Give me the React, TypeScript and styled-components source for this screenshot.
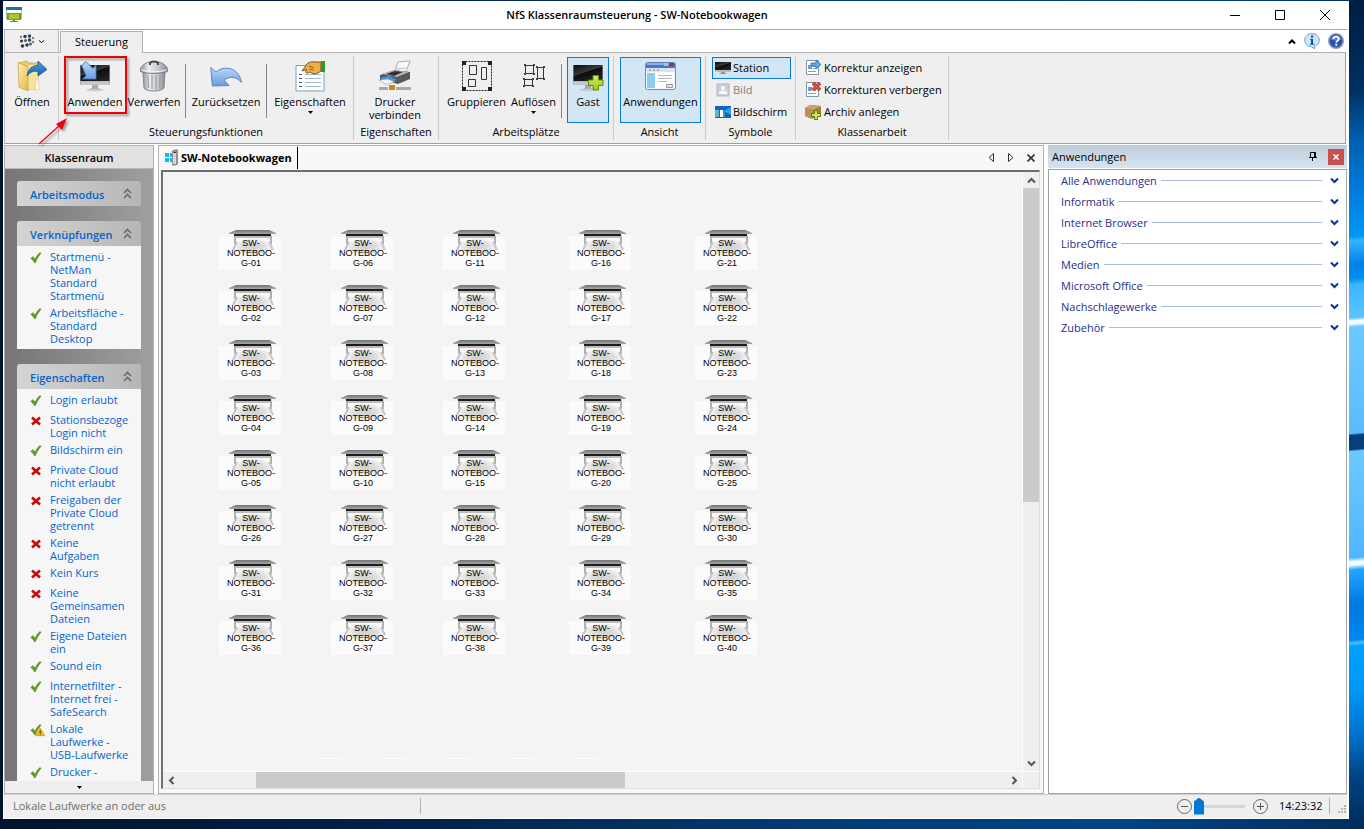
import React from "react";
import styled, { createGlobalStyle, css } from "styled-components";

const ui = `"Open Sans", "Noto Sans", sans-serif`;

const GlobalStyle = createGlobalStyle`
  * { box-sizing: border-box; }
  html, body { margin: 0; }
  body { font: 11px/13px ${ui}; color: #000; }
  button, input { font: inherit; color: inherit; }
  button { background: none; border: 0; padding: 0; margin: 0; }
  svg { display: block; flex: none; }
  ul { list-style: none; margin: 0; padding: 0; }
  h2, h3 { margin: 0; font-size: inherit; }
`;

/* ---------- Desktop and window frame ---------- */

const Desktop = styled.div`
  min-height: 100vh;
  height: 100vh;
  padding: 1px 15px 10px 3px;
  display: flex;
  background:
    linear-gradient(175deg, #001d42 0, #003061 90px, #0060b0 140px, #0078d8 185px, #0098f6 236px, #35b4ff 240px, #0080e8 264px,
      #0090f0 278px, #3ab5ff 284px, #5cc4ff 317px, #f4fcff 320px, #f4fcff 323px, #6cc9ff 326px, #5abcff 432px, #05407d 434px,
      #05407d 448px, #6cc9ff 450px, #50b6ff 556px, #f4fcff 560px, #f4fcff 563px, #20a8ff 568px, #0078e0 602px, #0088ee 638px,
      #4cc0ff 641px, #00a0ff 644px, #0098f8 685px, #0074d0 730px, #004384 775px, #002a55 829px) right top / 15px 100% no-repeat,
    linear-gradient(90deg, #001430 0, #00214a 30%, #003d78 60%, #004488 82%, #003060 100%);
`;

const Window = styled.div`
  flex: 1;
  min-width: 0;
  display: flex;
  flex-direction: column;
  background: #fff;
  padding: 0 2px 1px 1px;
`;

const TitleBar = styled.header`
  flex: none;
  height: 29px;
  display: flex;
  align-items: center;
  border-bottom: 1px solid #a8a8a8;
  padding: 0 0 0 2px;
`;

const TitleText = styled.div`
  flex: 1;
  text-align: center;
  padding-left: 40px;
  font-weight: 600;
  line-height: 16px;
`;

const CaptionButton = styled.button`
  width: 45px;
  height: 26px;
  display: flex;
  align-items: center;
  justify-content: center;
`;

const TabStrip = styled.nav`
  flex: none;
  height: 23px;
  display: flex;
  align-items: flex-end;
  border-bottom: 1px solid #b0b0b0;
  margin-right: 1px;
`;

const AppButton = styled.button`
  width: 55px;
  height: 22px;
  display: flex;
  align-items: center;
  justify-content: center;
  gap: 4px;
  background: #efefef;
  border: 1px solid #b8b8b8;
  border-width: 0 1px;
`;

const RibbonTab = styled.button`
  width: 83px;
  height: 22px;
  margin: 0 auto -1px 1px;
  padding-bottom: 2px;
  background: #efefef;
  border: 1px solid #b0b0b0;
  border-bottom: 0;
`;

const TabTools = styled.div`
  display: flex;
  align-items: center;
  gap: 8px;
  height: 22px;
  padding-right: 2px;
`;

const ToolButton = styled.button`
  display: flex;
`;

/* ---------- Ribbon ---------- */

const Ribbon = styled.div`
  flex: none;
  height: 91px;
  display: flex;
  padding: 3px 0;
  background: #efefef;
  border: 1px solid #a0a0a0;
  border-top: 0;
  border-left-color: #c0c0c0;
  margin-right: 1px;
`;

const Group = styled.section<{ $width: number }>`
  width: ${(p) => p.$width}px;
  flex: none;
  display: flex;
  flex-direction: column;
  border-right: 1px solid #cacaca;
`;

const GroupItems = styled.div<{ $pad?: number }>`
  flex: 1;
  display: flex;
  padding: 1px 0 0 ${(p) => p.$pad ?? 0}px;
`;

const GroupLabel = styled.h2`
  height: 17px;
  font-weight: 400;
  line-height: 18px;
  text-align: center;
`;

const BigButton = styled.button<{ $width: number; $active?: boolean }>`
  position: relative;
  width: ${(p) => p.$width}px;
  height: 66px;
  display: flex;
  flex-direction: column;
  align-items: center;
  gap: 3px;
  padding-top: 2px;
  border: 1px solid transparent;
  white-space: pre;
  ${(p) => p.$active && css`
    background: #d2e6f5;
    border-color: #0a7ad8;
  `}
`;

const Highlight = styled.span`
  position: absolute;
  inset: -2px -3px 8px -2px;
  border: 2px solid #ee0008;
  filter: drop-shadow(2px 2px 1px rgba(0, 0, 0, 0.35));
`;

const Pointer = styled.svg`
  position: absolute;
  left: -30px;
  top: 58px;
  overflow: visible;
  z-index: 2;
  filter: drop-shadow(2px 2px 1px rgba(0, 0, 0, 0.35));
`;

const Divider = styled.div<{ $after?: number }>`
  width: 1px;
  height: 54px;
  margin: 7px ${(p) => p.$after ?? 2}px 0 2px;
  background: #858585;
`;

const SmallList = styled.div`
  flex: 1;
  display: flex;
  flex-direction: column;
  align-items: flex-start;
`;

const SmallButton = styled.button<{ $active?: boolean }>`
  height: 22px;
  min-width: 79px;
  display: flex;
  align-items: center;
  gap: 2px;
  padding: 0 3px 1px 2px;
  border: 1px solid transparent;
  white-space: nowrap;
  &:disabled { color: #808080; }
  ${(p) => p.$active && css`
    background: #d2e6f5;
    border-color: #0a7ad8;
  `}
`;

/* ---------- Work area ---------- */

const Work = styled.div`
  flex: 1;
  min-height: 0;
  display: flex;
  gap: 4px;
  padding-top: 1px;
`;

const Sidebar = styled.aside`
  width: 150px;
  flex: none;
  display: flex;
  flex-direction: column;
  border: 1px solid #b2b2b2;
`;

const SidebarTitle = styled.h2`
  flex: none;
  height: 23px;
  line-height: 24px;
  text-align: center;
  font-weight: 600;
  background: #e1e1e1;
  border-bottom: 1px solid #b8b8b8;
`;

const SidebarBody = styled.div`
  flex: 1;
  min-height: 0;
  overflow: hidden;
  display: flex;
  flex-direction: column;
  gap: 15px;
  padding: 12px 12px 0;
  background: linear-gradient(90deg, #757575, #9f9f9f);
`;

const SidebarMore = styled.button`
  flex: none;
  height: 12px;
  display: flex;
  align-items: center;
  justify-content: center;
  background: #efefef;
`;

const Box = styled.section`
  flex: none;
`;

const BoxHead = styled.button`
  width: 100%;
  height: 25px;
  display: flex;
  align-items: center;
  justify-content: space-between;
  padding: 2px 9px 0 13px;
  border-radius: 3px 3px 0 0;
  background: linear-gradient(90deg, #d4d4d4, #b6b6b6);
  color: #0464cc;
  font-weight: 600;
  > svg { margin-top: -3px; }
`;

const BoxList = styled.ul`
  padding: 4px 11px 0 13px;
  background: #f6f6f6;
`;

const BoxItem = styled.li`
  display: flex;
  gap: 7px;
  min-height: 20px;
  padding-bottom: 4px;
  color: #0464cc;
  > svg { margin-right: -3px; }
`;

const ItemText = styled.span`
  flex: 1;
  min-width: 0;
  overflow-x: clip;
  white-space: pre;
`;

const Document = styled.main`
  flex: 1;
  min-width: 0;
  display: flex;
  flex-direction: column;
  border: 1px solid #b2b2b2;
  background: #f8f8f8;
  padding: 0 2px 3px;
`;

const DocumentTabs = styled.div`
  flex: none;
  height: 24px;
  display: flex;
  align-items: center;
  padding-bottom: 1px;
`;

const DocumentTab = styled.button`
  height: 22px;
  display: flex;
  align-items: center;
  gap: 2px;
  padding: 0 5px 0 3px;
  margin-right: auto;
  font-weight: 700;
  border-right: 1px solid #000;
`;

const NavButton = styled.button`
  width: 20px;
  height: 20px;
  display: flex;
  align-items: center;
  justify-content: center;
`;

const Canvas = styled.div`
  flex: 1;
  min-height: 0;
  margin: 0 1px 1px 0;
  display: grid;
  grid-template-columns: minmax(0, 1fr) 16px;
  grid-template-rows: minmax(0, 1fr) 16px;
  gap: 1px;
  border: 2px solid #6e6e6e;
  border-right: 1px solid #dcdcdc;
  border-bottom: 1px solid #dcdcdc;
  background: #fcfcfc;
`;

const Room = styled.div`
  overflow: hidden;
  background: #f4f4f4;
  display: flex;
  flex-direction: column;
  justify-content: space-between;
`;

const Stations = styled.div`
  display: grid;
  grid-template-columns: 112px 112px 126px 126px 62px;
  grid-auto-rows: 55px;
  padding: 57px 0 0 56px;
`;

const StationTile = styled.button`
  width: 62px;
  height: 41px;
  display: flex;
  flex-direction: column;
  align-items: center;
  position: relative;
  padding: 9px 0 0 2px;
  background: linear-gradient(#f4f4f4 7px, #fbfbfb 7px);
  font: 9px/10px "Liberation Sans", Arial, sans-serif;
  white-space: pre;
  > svg { position: absolute; top: 1px; left: 9px; }
  > span { position: relative; }
`;

const Slots = styled.div`
  display: flex;
  gap: 43px;
  padding: 0 0 12px 157px;
`;

const Slot = styled.div`
  width: 21px;
  height: 1px;
  background: #fff;
`;

const VScroll = styled.div`
  display: flex;
  flex-direction: column;
  background: #efefef;
`;

const HScroll = styled.div`
  display: flex;
  background: #efefef;
`;

const ScrollArrow = styled.button`
  flex: none;
  width: 16px;
  height: 16px;
  display: flex;
  align-items: center;
  justify-content: center;
`;

const Track = styled.div<{ $vertical?: boolean }>`
  flex: 1;
  display: flex;
  flex-direction: ${(p) => (p.$vertical ? "column" : "row")};
`;

const Thumb = styled.div<{ $size: number }>`
  flex: ${(p) => p.$size};
  background: #cbcbcb;
`;

const Space = styled.div<{ $grow: number }>`
  flex: ${(p) => p.$grow};
`;

const Corner = styled.div`
  background: #efefef;
`;

/* ---------- Applications panel ---------- */

const Apps = styled.aside`
  width: 299px;
  flex: none;
  display: flex;
  flex-direction: column;
`;

const AppsHead = styled.div`
  flex: none;
  height: 23px;
  display: flex;
  align-items: center;
  padding: 0 3px 0 4px;
  background: linear-gradient(#becbda, #d6e4f1);
`;

const AppsTitle = styled.h2`
  flex: 1;
  font-weight: 400;
`;

const CloseBox = styled.button`
  width: 16px;
  height: 16px;
  margin-left: 11px;
  display: flex;
  align-items: center;
  justify-content: center;
  background: #c75050;
`;

const AppsBody = styled.div`
  flex: 1;
  margin-top: 1px;
  border: 1px solid #a0a0a0;
  border-right-color: #a0aab4;
`;

const AppsRow = styled.button`
  width: 100%;
  height: 21px;
  display: flex;
  align-items: center;
  gap: 4px;
  padding: 0 7px 0 12px;
  color: #1e2f8c;
`;

const AppsRule = styled.span`
  flex: 1;
  height: 1px;
  margin-right: 4px;
  background: #aabbe0;
`;

/* ---------- Status bar ---------- */

const StatusBar = styled.footer`
  flex: none;
  height: 24px;
  display: flex;
  align-items: center;
  padding-bottom: 1px;
  border-top: 1px solid #d0d0d0;
  background: #efefef;
  color: #6e6e6e;
`;

const StatusText = styled.div`
  width: 417px;
  height: 16px;
  line-height: 16px;
  padding-left: 9px;
  border-right: 1px solid #b0b0b0;
  margin-right: auto;
`;

const Zoom = styled.label`
  display: flex;
  align-items: center;
`;

const ZoomRange = styled.input`
  appearance: none;
  width: 51px;
  height: 17px;
  margin: 0 8px 0 2px;
  background: linear-gradient(#d6d6d6, #d6d6d6) center / 100% 3px no-repeat;
  &::-webkit-slider-thumb {
    appearance: none;
    width: 10px;
    height: 17px;
    background: #0078d7;
    clip-path: polygon(0 4px, 50% 0, 100% 4px, 100% 100%, 0 100%);
  }
`;

const Clock = styled.time`
  width: 51px;
  height: 16px;
  line-height: 16px;
  margin: 0 7px 0 11px;
  color: #000;
  border-right: 1px solid #b0b0b0;
`;

/* ---------- Icons ---------- */

const CaretDown = () => (
  <svg width="5" height="3" viewBox="0 0 5 3"><path d="M0 0h5L2.500 3z" /></svg>
);

const Chevron = ({ turn = 0, color = "#555" }: { turn?: number; color?: string }) => (
  <svg width="9" height="9" viewBox="0 0 9 9">
    <path d="M1 2.500l3.500 3.500L8 2.500" transform={`rotate(${turn} 4.500 4.500)`} fill="none" stroke={color} strokeWidth="2" />
  </svg>
);

const LogoIcon = () => (
  <svg width="16" height="16" viewBox="0 0 16 16">
    <rect x=".5" y=".5" width="15" height="11" fill="#fff" stroke="#aab4ba" />
    <path d="M0 0h16v3H0z" fill="#087aa8" />
    <path d="M1 6h14v7H1z" fill="#779a18" /><path d="M3 7h10v5H3z" fill="#abc62a" />
    <path d="M7 13h2v1h3v1H4v-1h3z" fill="#667a80" />
  </svg>
);

const DotsIcon = () => (
  <svg width="16" height="14" viewBox="0 0 16 14" fill="#2c404c">
    <circle cx="2" cy="3" r="1.200" opacity=".6" /><circle cx="6" cy="2.500" r="1.700" /><circle cx="10.500" cy="2" r="1.700" /><circle cx="14" cy="4" r="1.200" opacity=".6" />
    <circle cx="2.500" cy="7" r="1.600" /><circle cx="6.500" cy="6.500" r="1.600" opacity=".8" /><circle cx="10.500" cy="6" r="1.700" /><circle cx="14" cy="8" r="1.300" opacity=".6" />
    <circle cx="3.500" cy="12" r="1.800" /><circle cx="8" cy="11" r="1.800" /><circle cx="11.500" cy="10" r="1.500" opacity=".8" />
  </svg>
);

const InfoIcon = () => (
  <svg width="16" height="16" viewBox="0 0 16 16">
    <path d="M8 .6c4.200 0 7.300 2.900 7.300 6.500 0 3-2 5.400-4.800 6.100L10.800 16 7.500 13.700C3.500 13.500.7 10.700.7 7.100.7 3.500 3.800.6 8 .6z" fill="#cfe6f8" stroke="#6fa2cd" />
    <path d="M7 2.500h2.300v2H7zM6 5.800h3v5h1.300v1H5.800v-1H7v-4H6z" fill="#124da5" />
  </svg>
);

const HelpIcon = () => (
  <svg width="16" height="16" viewBox="0 0 16 16">
    <circle cx="8" cy="8" r="7.200" fill="#2450b5" stroke="#8c98b4" strokeWidth="1.600" />
    <path d="M2.500 6.500a6 5 0 0111 0c-3 1.500-8 1.500-11 0z" fill="#6e96e0" opacity=".7" />
    <path d="M5.300 6.100C5.300 4.500 6.400 3.600 8 3.600s2.800.9 2.800 2.300c0 1.900-2.500 1.900-2.500 3.800" fill="none" stroke="#fff" strokeWidth="1.700" />
    <rect x="7.300" y="10.800" width="2" height="1.900" fill="#fff" />
  </svg>
);

const Gradients = () => (
  <svg width="0" height="0" style={{ position: "absolute" }} aria-hidden="true">
    <defs>
      <linearGradient id="folder" x2="1" y2="1"><stop stopColor="#fff0b0" /><stop offset="1" stopColor="#e3b84c" /></linearGradient>
      <linearGradient id="blue" x2="0" y2="1"><stop stopColor="#b8d6fa" /><stop offset="1" stopColor="#6d9be0" /></linearGradient>
      <linearGradient id="arrow" x2="0" y2="1"><stop stopColor="#4f9fe0" /><stop offset="1" stopColor="#1d62ab" /></linearGradient>
      <linearGradient id="screen" x2=".6" y2="1"><stop stopColor="#0a0a0a" /><stop offset=".5" stopColor="#3a3a3a" /><stop offset=".52" stopColor="#0c0c0c" /><stop offset="1" stopColor="#222" /></linearGradient>
      <linearGradient id="metal" x2="1"><stop stopColor="#8e9196" /><stop offset=".3" stopColor="#eceef0" /><stop offset=".7" stopColor="#c2c5c9" /><stop offset="1" stopColor="#84878c" /></linearGradient>
      <linearGradient id="lime" x2="0" y2="1"><stop stopColor="#d9ee6a" /><stop offset="1" stopColor="#9cc414" /></linearGradient>
      <linearGradient id="roof" x2="0" y2="1"><stop stopColor="#6f7373" /><stop offset="1" stopColor="#a8a8a8" /></linearGradient>
      <radialGradient id="desk"><stop stopColor="#cfcfcf" /><stop offset=".6" stopColor="#dedede" /><stop offset="1" stopColor="#f8f8f8" /></radialGradient>
    </defs>
  </svg>
);

const OpenIcon = () => (
  <svg width="32" height="32" viewBox="0 0 32 32">
    <path d="M3 3l8-2 2 2h9v26H7z" fill="#edc869" stroke="#c79d3e" strokeWidth=".7" />
    <path d="M12 5h10v24H12z" fill="#f7e3a0" />
    <path d="M2 2.500l10 4.200V31L3 27z" fill="url(#folder)" stroke="#c79d3e" strokeWidth=".7" />
    <path d="M20 18l3 4v8h-4z" fill="#fffbe5" stroke="#dfbf62" strokeWidth=".6" />
    <path d="M11 16C12.500 8 16.500 5.500 22 5.500V1l9 8.500L22 16v-4.500c-4.500-1-8 .5-11 4.500z" fill="url(#arrow)" stroke="#1c5590" strokeWidth=".8" />
  </svg>
);

const MonitorBase = () => (
  <>
    <rect x="1" y="5" width="30" height="20" rx="1" fill="#a9adb0" />
    <path d="M1.500 5h29v16h-29z" fill="url(#screen)" />
    <path d="M2 21.500h28V25H2z" fill="#c5c8ca" />
    <path d="M13 25h6v3l5 2H8l5-2z" fill="#a7aaad" /><ellipse cx="16" cy="30" rx="9" ry="1.200" fill="#c8cbcd" />
  </>
);

const ApplyIcon = () => (
  <svg width="32" height="32" viewBox="0 0 32 32">
    <MonitorBase />
    <path d="M2.500 5.500L7 1.500l7 7 3-3.500v14H3.500L7 15.500z" fill="url(#blue)" stroke="#4774b4" strokeWidth=".9" strokeLinejoin="round" />
  </svg>
);

const GuestIcon = () => (
  <svg width="32" height="32" viewBox="0 0 32 32">
    <MonitorBase />
    <path d="M21 15.500h5.500V20H31v5.500h-4.500V30H21v-4.500h-4.500V20H21z" fill="url(#lime)" stroke="#668b0a" />
  </svg>
);

const TrashIcon = () => (
  <svg width="32" height="32" viewBox="0 0 32 32">
    <path d="M5 12h22l-1 16c-3 4-17 4-20 0z" fill="url(#metal)" stroke="#85888d" />
    <path d="M10 15l.5 13M14 15v14M18 15v14M22 15l-.5 13" stroke="#9a9ea3" strokeWidth="1.200" />
    <path d="M2.500 9C4 4 10 1.500 16 1.500S28 4 29.500 9v2.500c-5 2.600-22 2.600-27 0z" fill="url(#metal)" stroke="#7c7f84" />
    <path d="M3 9.500c6 3 20 3 26 0" fill="none" stroke="#f5f5f5" />
    <path d="M12 5V3c2-2 6-2 8 0v2" fill="none" stroke="#44474b" strokeWidth="2" />
  </svg>
);

const UndoIcon = () => (
  <svg width="32" height="32" viewBox="0 0 32 32">
    <path d="M.8 7.500L6 12C14 5 29 7 31.500 22.500c-5-6-12-6.500-17.500-2.500l5 5.500-16.700.500z" fill="url(#blue)" stroke="#5a86c4" strokeLinejoin="round" />
  </svg>
);

const PropertiesIcon = () => (
  <svg width="32" height="32" viewBox="0 0 32 32">
    <path d="M2 5.500h28V31H2z" fill="#fff" stroke="#7ca0c0" />
    <path d="M5 14.500h3M5 18.500h3M5 22.500h3M5 26.500h3" stroke="#3c5a92" />
    <path d="M11 14.500h16M11 18.500h16M11 22.500h16M11 26.500h16" stroke="#a1bad3" />
    <path d="M8 11l5-7c2-2 5-2.500 8-2h6v9c-4 3-8 4-10 1.500l-2-.5-2 1.500-1.500-1.500 1-2.500z" fill="#eab04a" stroke="#7c5116" />
    <path d="M15 6l5 2M15.500 9l4 1" stroke="#94621c" /><path d="M27 1h4v11h-4z" fill="#2f9a2f" />
  </svg>
);

const PrinterIcon = () => (
  <svg width="34" height="32" viewBox="0 0 34 32">
    <path d="M16 13l4-11 12-1-5 13z" fill="#fafafa" stroke="#8c8c8c" strokeWidth=".7" />
    <path d="M18 9l10-1M17 12l10-1" stroke="#bdbdbd" />
    <path d="M2 15l14-5 16 2v7l-12 5L2 20z" fill="#55585d" />
    <path d="M4 14l12-4 15 2-12 5z" fill="#b5b9bf" /><path d="M8 14l9-3 8 1-9 4z" fill="#303236" />
    <path d="M2 18l9-2 8 4-10 3z" fill="#4597d8" /><path d="M1 20l9-1 7 3-9 2.500z" fill="#eef5fa" stroke="#7d8790" strokeWidth=".5" />
    <path d="M1 27h32v3H1z" fill="#aaa" /><path d="M10 25h8v6h-8z" fill="#efefef" /><path d="M11 25h6v5h-6z" fill="#cb8a0c" />
  </svg>
);

const GroupIcon = () => (
  <svg width="32" height="32" viewBox="0 0 32 32" fill="none">
    <rect x="1.500" y="1.500" width="29" height="29" stroke="#222" strokeDasharray="2 1" />
    <path d="M1 1h4v4H1zM27 1h4v4h-4zM1 27h4v4H1zM27 27h4v4h-4z" fill="#222" />
    <path d="M8.500 5.500h7v9h-7zM20.500 7.500h5v12h-5zM7.500 19.500h7v7h-7z" stroke="#333" />
  </svg>
);

const UngroupIcon = () => (
  <svg width="32" height="32" viewBox="0 0 32 32">
    <path d="M7.500 5.500h8v8h-8zM19.500 7.500h6v11h-6zM6.500 19.500h8v6h-8z" fill="none" stroke="#333" />
    <path d="M6 4h2v2H6zM15 4h2v2h-2zM6 13h2v2H6zM15 13h2v2h-2zM18 6h2v2h-2zM25 6h2v2h-2zM18 18h2v2h-2zM25 18h2v2h-2zM5 18h2v2H5zM14 18h2v2h-2zM5 25h2v2H5zM14 25h2v2h-2z" fill="#444" />
  </svg>
);

const WindowIcon = () => (
  <svg width="32" height="32" viewBox="0 0 32 32">
    <rect x=".5" y="2.500" width="30" height="27" rx="2" fill="#f5f7fa" stroke="#7f8ba0" />
    <path d="M1 4q0-1.500 1.500-1.500h26q1.500 0 1.500 1.500v4H1z" fill="#4c77c8" /><path d="M2 3h27v2H2z" fill="#8cb0ea" />
    <path d="M19 3h4v3h-4z" fill="#7ad2f2" /><path d="M24 3h5v3h-5z" fill="#c22b20" />
    <path d="M1 8h29v4H1z" fill="#dde3ec" /><path d="M4 10h2M8 10h2M12 10h2" stroke="#88684c" />
    <path d="M2 13h8v15H2z" fill="#8ecdf2" /><path d="M10 13h19v15H10z" fill="#fff" />
    <path d="M13 15.500h14M13 18.500h14M13 21.500h9" stroke="#bbb" /><path d="M21.500 24.500h6v3h-6z" fill="#e5e5e5" stroke="#999" />
  </svg>
);

const StationIcon = () => (
  <svg width="16" height="14" viewBox="0 0 16 14">
    <path d="M0 1h16v8H0z" fill="url(#screen)" /><path d="M0 9h16v2H0z" fill="#b8bbbd" /><path d="M6 11h4v1l2 1H4l2-1z" fill="#999" />
  </svg>
);

const PersonIcon = () => (
  <svg width="16" height="14" viewBox="0 0 16 14">
    <rect x="2" y="1" width="12" height="12" fill="#c8ced8" stroke="#b2b9c5" /><circle cx="8" cy="5" r="2" fill="#fff" /><path d="M4 11V9q4-3 8 0v2z" fill="#fff" />
  </svg>
);

const ScreenIcon = () => (
  <svg width="16" height="12" viewBox="0 0 16 12">
    <path d="M0 0h16v12H0z" fill="#0b66c4" /><path d="M9 5l7-4v8z" fill="#2da3f4" />
    <path d="M0 4h4v7H0z" fill="#5fb4d0" /><path d="M5 4h3v7H5z" fill="#fff" /><path d="M8 5h2v6H8z" fill="#3c9a9a" />
  </svg>
);

const SheetBase = () => (
  <>
    <path d="M1.500 1.500h12v14h-12z" fill="#fff" stroke="#8795a3" />
    <path d="M3 6h4v4H3z" fill="#6c9fd0" /><path d="M3 12.500h8M8 7.500h3M8 9.500h3" stroke="#79a5cf" />
  </>
);

const ShowIcon = () => (
  <svg width="17" height="17" viewBox="0 0 17 17">
    <SheetBase /><path d="M6 4h5V1l5 4.500L11 10V7H6z" fill="#67a8e2" stroke="#2c6cab" strokeWidth=".8" />
  </svg>
);

const HideIcon = () => (
  <svg width="17" height="17" viewBox="0 0 17 17">
    <SheetBase /><path d="M8 2l7 7M15 2L8 9" stroke="#9e2a26" strokeWidth="3.400" /><path d="M8 2l7 7M15 2L8 9" stroke="#d9534c" strokeWidth="2" />
  </svg>
);

const ArchiveIcon = () => (
  <svg width="17" height="16" viewBox="0 0 17 16">
    <path d="M0 4l5-3 11 1v8l-9 5-7-3z" fill="#a87c44" /><path d="M0 4l5-3 11 1-8 4z" fill="#cda367" /><path d="M0 4l8 2v9l-8-3z" fill="#bd9052" />
    <path d="M9.500 6.500h3v3h3v3h-3v3h-3v-3h-3v-3h3z" fill="#cfe858" stroke="#4f7d10" />
  </svg>
);

const CollapseIcon = () => (
  <svg width="9" height="11" viewBox="0 0 9 11" fill="none" stroke="#6a6a6a" strokeWidth="1.600">
    <path d="M1 5l3.500-3.500L8 5M1 10l3.500-3.500L8 10" />
  </svg>
);

const CheckIcon = ({ warn = false }: { warn?: boolean }) => (
  <svg width="16" height="15" viewBox="0 0 16 15">
    <path d="M.5 8.500l2.200-2.200L5 8.500Q7 4.500 9.800 2.300l1.700.700Q8 7 5.500 13H4.300Q3 10.500 .5 8.500z" fill="#66982a" />
    {warn && (
      <>
        <path d="M10.200 6L15 13.700H5.600z" fill="#f8b800" stroke="#d09200" strokeWidth=".6" />
        <path d="M9.700 8.500h1.200v2.500H9.700zM9.700 11.800h1.200v1H9.700z" fill="#4a3a00" />
      </>
    )}
  </svg>
);

const CrossIcon = () => (
  <svg width="16" height="15" viewBox="0 0 16 15">
    <path d="M2 4.500l8 7M10 4.500l-8 7" stroke="#c80a0a" strokeWidth="2.600" />
  </svg>
);

const ComputerIcon = () => (
  <svg width="15" height="17" viewBox="0 0 15 17">
    <path d="M1 4h4v4H1zM6 4h4v4H6zM1 9h4v4H1zM6 9h4v4H6z" fill="#18b7ee" />
    <path d="M8 2l2-1.500h4V15l-2 1.500H8z" fill="#8b9092" /><path d="M9 3h3v12H9z" fill="#d4d7d8" /><path d="M9.500 3.500h2.500" stroke="#333" />
  </svg>
);

const DeskIcon = () => (
  <svg width="48" height="25" viewBox="0 0 48 25">
    <ellipse cx="25" cy="17" rx="19" ry="9" fill="url(#desk)" />
    <path d="M8 6h34v2H8z" fill="#bcbcbc" />
    <path d="M7 6v8M43 6v8" stroke="#b0b0b0" strokeWidth="2" />
    <path d="M9 12l-4 8M41 12l4 8" stroke="#c4c4c4" strokeWidth="2" />
    <path d="M8 0h33l7 3v1H1V3z" fill="url(#roof)" /><path d="M6 4h37v2H6z" fill="#1c1c1c" />
  </svg>
);

/* ---------- Content ---------- */

type State = "ok" | "no" | "warn";

const links: [State, string][] = [
  ["ok", "Startmenü -\nNetMan\nStandard\nStartmenü"],
  ["ok", "Arbeitsfläche -\nStandard\nDesktop"],
];

const properties: [State, string][] = [
  ["ok", "Login erlaubt"],
  ["no", "Stationsbezoge\nLogin nicht"],
  ["ok", "Bildschirm ein"],
  ["no", "Private Cloud\nnicht erlaubt"],
  ["no", "Freigaben der\nPrivate Cloud\ngetrennt"],
  ["no", "Keine\nAufgaben"],
  ["no", "Kein Kurs"],
  ["no", "Keine\nGemeinsamen\nDateien"],
  ["ok", "Eigene Dateien\nein"],
  ["ok", "Sound ein"],
  ["ok", "Internetfilter -\nInternet frei -\nSafeSearch"],
  ["warn", "Lokale\nLaufwerke -\nUSB-Laufwerke"],
  ["ok", "Drucker -"],
];

const stationRows = [
  ["01", "06", "11", "16", "21"],
  ["02", "07", "12", "17", "22"],
  ["03", "08", "13", "18", "23"],
  ["04", "09", "14", "19", "24"],
  ["05", "10", "15", "20", "25"],
  ["26", "27", "28", "29", "30"],
  ["31", "32", "33", "34", "35"],
  ["36", "37", "38", "39", "40"],
];

const applications = [
  "Alle Anwendungen", "Informatik", "Internet Browser", "LibreOffice",
  "Medien", "Microsoft Office", "Nachschlagewerke", "Zubehör",
];

function SidebarBox({ title, items = [] }: { title: string; items?: [State, string][] }) {
  return (
    <Box>
      <BoxHead>{title}<CollapseIcon /></BoxHead>
      {items.length > 0 && (
        <BoxList>
          {items.map(([state, text]) => (
            <BoxItem key={text}>
              {state === "no" ? <CrossIcon /> : <CheckIcon warn={state === "warn"} />}
              <ItemText>{text}</ItemText>
            </BoxItem>
          ))}
        </BoxList>
      )}
    </Box>
  );
}

export default function App() {
  return (
    <Desktop>
      <GlobalStyle />
      <Gradients />
      <Window>
        <TitleBar>
          <LogoIcon />
          <TitleText>NfS Klassenraumsteuerung - SW-Notebookwagen</TitleText>
          <CaptionButton aria-label="Minimieren"><svg width="10" height="10"><path d="M0 5.500h10" stroke="#000" /></svg></CaptionButton>
          <CaptionButton aria-label="Maximieren"><svg width="10" height="10"><path d="M.5.5h9v9h-9z" fill="none" stroke="#000" /></svg></CaptionButton>
          <CaptionButton aria-label="Schließen"><svg width="10" height="10"><path d="M0 0l10 10M10 0L0 10" stroke="#000" /></svg></CaptionButton>
        </TitleBar>
        <TabStrip>
          <AppButton aria-label="Menü">
            <DotsIcon />
            <svg width="5" height="3" viewBox="0 0 5 3"><path d="M0 .5L2.500 2.500 5 .5" fill="none" stroke="#000" /></svg>
          </AppButton>
          <RibbonTab>Steuerung</RibbonTab>
          <TabTools>
            <ToolButton aria-label="Menüband einklappen"><svg width="8" height="5"><path d="M1 4.500L4 1.500l3 3" fill="none" stroke="#000" strokeWidth="2" /></svg></ToolButton>
            <ToolButton aria-label="Info"><InfoIcon /></ToolButton>
            <ToolButton aria-label="Hilfe"><HelpIcon /></ToolButton>
          </TabTools>
        </TabStrip>

        <Ribbon>
          <Group $width={54}>
            <GroupItems $pad={1}><BigButton $width={54}><OpenIcon /><span>Öffnen</span></BigButton></GroupItems>
          </Group>
          <Group $width={295}>
            <GroupItems $pad={6}>
              <BigButton $width={60}>
                <ApplyIcon /><span>Anwenden</span>
                <Highlight />
                <Pointer width="30" height="30">
                  <path d="M3 28L24 9" stroke="#f00010" strokeWidth="1.200" />
                  <path d="M31 2l-5 12-6-6z" fill="#f00010" />
                </Pointer>
              </BigButton>
              <BigButton $width={58}><TrashIcon /><span>Verwerfen</span></BigButton>
              <Divider />
              <BigButton $width={76}><UndoIcon /><span>Zurücksetzen</span></BigButton>
              <Divider />
              <BigButton $width={82}><PropertiesIcon /><span>Eigenschaften</span><CaretDown /></BigButton>
            </GroupItems>
            <GroupLabel>Steuerungsfunktionen</GroupLabel>
          </Group>
          <Group $width={85}>
            <GroupItems><BigButton $width={82}><PrinterIcon /><span>{"Drucker\nverbinden"}</span></BigButton></GroupItems>
            <GroupLabel>Eigenschaften</GroupLabel>
          </Group>
          <Group $width={175}>
            <GroupItems $pad={6}>
              <BigButton $width={63}><GroupIcon /><span>Gruppieren</span></BigButton>
              <BigButton $width={51}><UngroupIcon /><span>Auflösen</span><CaretDown /></BigButton>
              <Divider $after={5} />
              <BigButton $width={42} $active><GuestIcon /><span>Gast</span></BigButton>
            </GroupItems>
            <GroupLabel>Arbeitsplätze</GroupLabel>
          </Group>
          <Group $width={92}>
            <GroupItems $pad={6}><BigButton $width={81} $active><WindowIcon /><span>Anwendungen</span></BigButton></GroupItems>
            <GroupLabel>Ansicht</GroupLabel>
          </Group>
          <Group $width={90}>
            <GroupItems $pad={6}>
              <SmallList>
                <SmallButton $active><StationIcon />Station</SmallButton>
                <SmallButton disabled><PersonIcon />Bild</SmallButton>
                <SmallButton><ScreenIcon />Bildschirm</SmallButton>
              </SmallList>
            </GroupItems>
            <GroupLabel>Symbole</GroupLabel>
          </Group>
          <Group $width={153}>
            <GroupItems $pad={6}>
              <SmallList>
                <SmallButton><ShowIcon />Korrektur anzeigen</SmallButton>
                <SmallButton><HideIcon />Korrekturen verbergen</SmallButton>
                <SmallButton><ArchiveIcon />Archiv anlegen</SmallButton>
              </SmallList>
            </GroupItems>
            <GroupLabel>Klassenarbeit</GroupLabel>
          </Group>
        </Ribbon>

        <Work>
          <Sidebar>
            <SidebarTitle>Klassenraum</SidebarTitle>
            <SidebarBody>
              <SidebarBox title="Arbeitsmodus" />
              <SidebarBox title="Verknüpfungen" items={links} />
              <SidebarBox title="Eigenschaften" items={properties} />
            </SidebarBody>
            <SidebarMore aria-label="Weiter nach unten"><CaretDown /></SidebarMore>
          </Sidebar>

          <Document>
            <DocumentTabs>
              <DocumentTab><ComputerIcon />SW-Notebookwagen</DocumentTab>
              <NavButton aria-label="Zurück"><svg width="6" height="9"><path d="M5.500.5v8L1 4.500z" fill="none" stroke="#333" /></svg></NavButton>
              <NavButton aria-label="Vor"><svg width="6" height="9"><path d="M.5.5v8L5 4.500z" fill="none" stroke="#333" /></svg></NavButton>
              <NavButton aria-label="Schließen"><svg width="8" height="8"><path d="M.5.5l7 7M7.500.5l-7 7" stroke="#333" strokeWidth="1.600" /></svg></NavButton>
            </DocumentTabs>
            <Canvas>
              <Room>
                <Stations>
                  {stationRows.flat().map((n) => (
                    <StationTile key={n}><DeskIcon /><span>{`SW-\nNOTEBOO-\nG-${n}`}</span></StationTile>
                  ))}
                </Stations>
                <Slots><Slot /><Slot /><Slot /><Slot /><Slot /></Slots>
              </Room>
              <VScroll>
                <ScrollArrow aria-label="Nach oben"><Chevron turn={180} /></ScrollArrow>
                <Track $vertical><Thumb $size={314} /><Space $grow={253} /></Track>
                <ScrollArrow aria-label="Nach unten"><Chevron /></ScrollArrow>
              </VScroll>
              <HScroll>
                <ScrollArrow aria-label="Nach links"><Chevron turn={90} /></ScrollArrow>
                <Track><Space $grow={77} /><Thumb $size={369} /><Space $grow={381} /></Track>
                <ScrollArrow aria-label="Nach rechts"><Chevron turn={-90} /></ScrollArrow>
              </HScroll>
              <Corner />
            </Canvas>
          </Document>

          <Apps>
            <AppsHead>
              <AppsTitle>Anwendungen</AppsTitle>
              <ToolButton aria-label="Anheften"><svg width="8" height="9"><path d="M1.500 5.500v-5h5v5M0 5.500h8M5.500 0v6M3.500 6v3" fill="none" stroke="#000" /></svg></ToolButton>
              <CloseBox aria-label="Panel schließen"><svg width="6" height="6"><path d="M.5.5l5 5M5.500.5l-5 5" stroke="#fff" strokeWidth="1.500" /></svg></CloseBox>
            </AppsHead>
            <AppsBody>
              <ul>
                {applications.map((name) => (
                  <li key={name}><AppsRow>{name}<AppsRule /><Chevron color="#0c2fa0" /></AppsRow></li>
                ))}
              </ul>
            </AppsBody>
          </Apps>
        </Work>

        <StatusBar>
          <StatusText>Lokale Laufwerke an oder aus</StatusText>
          <ToolButton aria-label="Verkleinern"><svg width="15" height="15"><circle cx="7.500" cy="7.500" r="7" fill="none" stroke="#666" /><path d="M4 7.500h7" stroke="#555" /></svg></ToolButton>
          <Zoom><ZoomRange type="range" min={0} max={100} defaultValue={0} aria-label="Zoom" /></Zoom>
          <ToolButton aria-label="Vergrößern"><svg width="15" height="15"><circle cx="7.500" cy="7.500" r="7" fill="none" stroke="#666" /><path d="M4 7.500h7M7.500 4v7" stroke="#555" /></svg></ToolButton>
          <Clock>14:23:32</Clock>
          <svg width="10" height="20" fill="#b5b5b5"><path d="M7 9h2v2H7zM7 12h2v2H7zM4 12h2v2H4zM7 15h2v2H7zM4 15h2v2H4zM1 15h2v2H1z" /></svg>
        </StatusBar>
      </Window>
    </Desktop>
  );
}
